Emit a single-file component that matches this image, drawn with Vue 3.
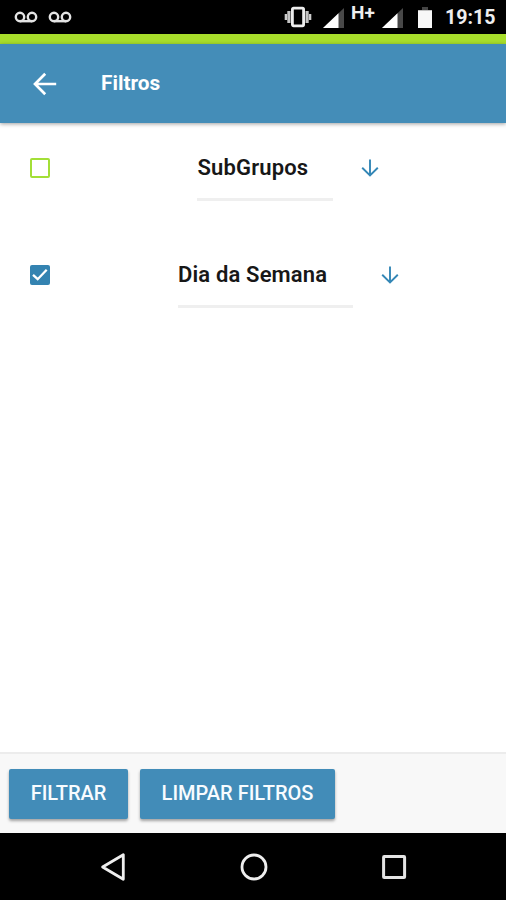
<template>
  <div class="screen">
    <div class="status-bar">
      <div class="notifications">
        <svg v-for="n in 2" :key="n" class="voicemail" width="24" height="14" viewBox="0 0 24 14">
          <g fill="none" stroke="#e4e4e4" stroke-width="2.4">
            <circle cx="6" cy="7" r="4.2" />
            <circle cx="18" cy="7" r="4.2" />
            <path d="M6 11.2H18" />
          </g>
        </svg>
      </div>
      <div class="system-icons">
        <svg class="vibrate" width="28" height="22" viewBox="0 0 28 22">
          <rect x="8.4" y="2.2" width="11.2" height="17.6" rx="1.2" fill="none" stroke="#eee" stroke-width="2.8" />
          <path d="M4.9 5V17M23.1 5V17" stroke="#c4c4c4" stroke-width="3.2" />
          <path d="M1.9 8V14M26.1 8V14" stroke="#ccc" stroke-width="2.4" />
        </svg>
        <svg class="signal" width="21" height="20" viewBox="0 0 21 20">
          <path d="M0 20L21 0V20Z" fill="#484848" />
          <path d="M0 20L15.5 5.2V20Z" fill="#fff" />
        </svg>
        <span class="network">H+</span>
        <svg class="signal" width="21" height="20" viewBox="0 0 21 20">
          <path d="M0 20L21 0V20Z" fill="#484848" />
          <path d="M0 20L15.5 5.2V20Z" fill="#fff" />
        </svg>
        <svg class="battery" width="14" height="21" viewBox="0 0 14 21">
          <path d="M4 0H10V3H14V6H0V3H4Z" fill="#444" />
          <rect y="3.3" width="14" height="17.7" fill="#f7f7f7" />
        </svg>
        <span class="clock">19:15</span>
      </div>
    </div>

    <header class="toolbar">
      <button class="back" aria-label="Voltar">
        <svg width="24" height="24" viewBox="0 0 24 24">
          <path d="M12.2 1.7L2 12L12.2 22.3M2 12H23.2" fill="none" stroke="#fff" stroke-width="2.7" />
        </svg>
      </button>
      <h1>Filtros</h1>
    </header>

    <main class="content">
      <div v-for="filtro in filtros" :key="filtro.nome" class="filter-row">
        <button
          class="checkbox"
          :class="{ checked: filtro.ativo }"
          role="checkbox"
          :aria-checked="filtro.ativo"
          :aria-label="filtro.nome"
          @click="filtro.ativo = !filtro.ativo"
        >
          <svg v-if="filtro.ativo" width="20" height="20" viewBox="0 0 20 20">
            <path d="M3 9.8L7.7 14.2L16.7 4.8" fill="none" stroke="#fff" stroke-width="2.3" />
          </svg>
        </button>
        <div class="filter-field">
          <div class="filter-name" :class="filtro.classe">{{ filtro.nome }}</div>
          <svg class="arrow" width="18" height="18" viewBox="0 0 18 18">
            <path d="M9 .5V16.5M1.2 8.8L9 16.5L16.8 8.8" fill="none" stroke="#3487b6" stroke-width="1.9" />
          </svg>
        </div>
      </div>
    </main>

    <footer class="footer">
      <button class="btn filtrar">FILTRAR</button>
      <button class="btn limpar" @click="limparFiltros">LIMPAR FILTROS</button>
    </footer>

    <nav class="nav-bar">
      <svg width="28" height="30" viewBox="0 0 28 30">
        <path d="M3.6 15L24.3 2.7V27.3Z" fill="none" stroke="#eee" stroke-width="2.8" stroke-linejoin="round" />
      </svg>
      <svg width="28" height="30" viewBox="0 0 28 30">
        <circle cx="14" cy="15" r="12" fill="none" stroke="#eee" stroke-width="2.8" />
      </svg>
      <svg width="28" height="30" viewBox="0 0 28 30">
        <rect x="3.6" y="4.6" width="21" height="21" rx=".6" fill="none" stroke="#e4e4e4" stroke-width="3" />
      </svg>
    </nav>
  </div>
</template>

<script setup>
import { ref } from 'vue';

const filtros = ref([
  { nome: 'SubGrupos', classe: 'subgrupos', ativo: false },
  { nome: 'Dia da Semana', classe: 'semana', ativo: true }
]);

const limparFiltros = () => {
  filtros.value.forEach((filtro) => {
    filtro.ativo = false;
  });
};
</script>

<style>
body {
  margin: 0;
}
</style>

<style scoped>
.screen {
  display: flex;
  flex-direction: column;
  width: 506px;
  height: 900px;
  overflow: hidden;
  background: #fff;
  font-family: Roboto, "Liberation Sans", sans-serif;
}

.screen svg {
  display: block;
  flex: none;
}

button {
  padding: 0;
  border: 0;
  background: none;
  font-family: inherit;
}

.status-bar {
  display: flex;
  justify-content: space-between;
  box-sizing: border-box;
  height: 44px;
  flex: none;
  border-bottom: 10px solid #a8de2b;
  background: #000;
  color: #eee;
}

.notifications {
  display: flex;
  gap: 10px;
  padding: 10px 0 0 14px;
}

.system-icons {
  display: flex;
  align-items: flex-start;
  padding-right: 11px;
}

.vibrate {
  margin: 6px 11px 0 0;
}

.signal {
  margin-top: 8px;
}

.network {
  width: 25px;
  margin: 2px 6px 0 7px;
  font-size: 19px;
  font-weight: 700;
  line-height: 22px;
  white-space: nowrap;
}

.battery {
  margin: 7px 13px 0 15px;
}

.clock {
  width: 50px;
  margin-top: 6px;
  font-size: 19.6px;
  font-weight: 700;
  line-height: 24px;
  white-space: nowrap;
}

.toolbar {
  display: flex;
  align-items: center;
  height: 79px;
  flex: none;
  background: #448db8;
  box-shadow: 0 1px 4px rgba(0, 0, 0, 0.38);
}

.back {
  margin-left: 33px;
}

.toolbar h1 {
  margin: 0 0 1px 44px;
  color: #fff;
  font-size: 20.8px;
  font-weight: 700;
  line-height: 24px;
}

.content {
  flex: 1;
  padding-top: 29px;
}

.filter-row {
  display: flex;
  align-items: flex-start;
  height: 107px;
  padding-left: 30px;
}

.checkbox {
  box-sizing: border-box;
  width: 20px;
  height: 20px;
  flex: none;
  margin-top: 6px;
  border: 2px solid #a3df37;
  border-radius: 2px;
}

.checkbox.checked {
  border: 0;
  background: #3483b1;
}

.filter-field {
  display: flex;
  flex: 1;
  justify-content: center;
  padding-left: 20px;
  align-items: flex-start;
}

.filter-name {
  box-sizing: border-box;
  height: 49px;
  padding-top: 1px;
  border-bottom: 3px solid #efefef;
  color: #171717;
  font-size: 22px;
  font-weight: 600;
  letter-spacing: 0.15px;
  line-height: 30px;
  text-indent: 0.5px;
  white-space: nowrap;
}

.subgrupos {
  width: 136px;
}

.semana {
  width: 175px;
}

.arrow {
  margin: 7px 0 0 28px;
}

.footer {
  display: flex;
  align-items: flex-start;
  gap: 12px;
  box-sizing: border-box;
  height: 81px;
  flex: none;
  padding: 15px 9px 0;
  border-top: 2px solid #ececec;
  background: #f8f8f8;
}

.btn {
  box-sizing: border-box;
  height: 50px;
  padding-bottom: 2px;
  border-radius: 2px;
  background: #428cb8;
  box-shadow: 0 2px 3px rgba(0, 0, 0, 0.35);
  color: #f8fcff;
  font-size: 20px;
  font-weight: 500;
  line-height: 48px;
  white-space: nowrap;
}

.filtrar {
  width: 119px;
}

.limpar {
  width: 195px;
}

.nav-bar {
  display: flex;
  justify-content: space-between;
  align-items: center;
  height: 67px;
  flex: none;
  padding: 0 98px 0 99px;
  background: #000;
}
</style>
